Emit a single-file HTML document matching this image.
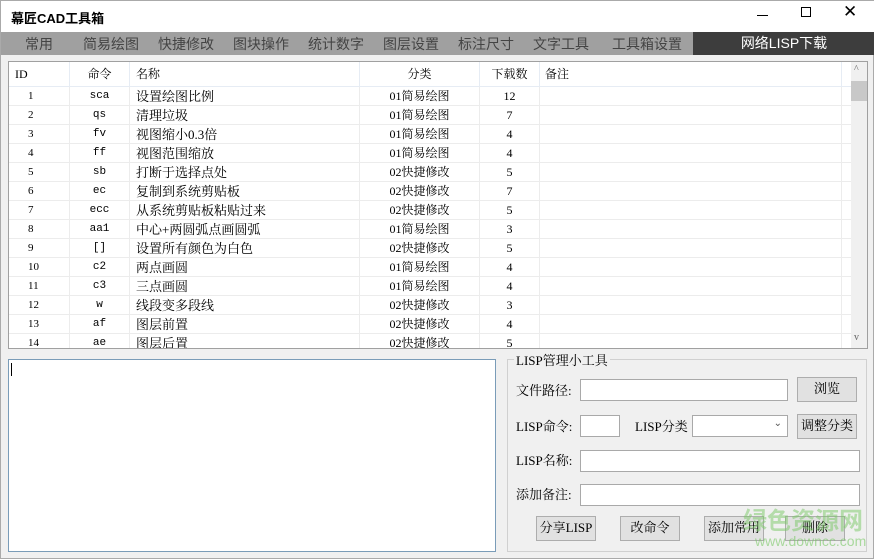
<!DOCTYPE html>
<html><head><meta charset="utf-8"><style>
*{margin:0;padding:0;box-sizing:border-box}
html{width:874px;height:559px;overflow:hidden;background:#f0f0f0}
body{width:874px;height:559px;background:#f0f0f0;font-family:"Liberation Serif","Noto Serif CJK SC","WenQuanYi Zen Hei",serif;font-size:12px;color:#000;position:relative;overflow:hidden;border:1px solid #aaa}
.abs{position:absolute}
#title{left:0;top:0;width:874px;height:31px;background:#fff}
#tabs{left:0;top:31px;width:874px;height:23px;background:#a0a0a0;font-family:"Liberation Sans","Noto Sans CJK SC",sans-serif;font-size:14px;color:#444}
#tabs span{position:absolute;top:2px}
#tbl{left:7px;top:60px;width:860px;height:288px;background:#fff;border:1px solid #a0a0a0;overflow:hidden}
.row{position:absolute;left:0;height:19px;width:842px;border-bottom:1px solid #ececec}
.c{position:absolute;top:0;height:19px;line-height:19px;border-right:1px solid #ececec;white-space:nowrap}
.hd .c{height:24px;line-height:24px;border-right:1px solid #e6ecf4}
.btn{position:absolute;background:#e1e1e1;border:1px solid #adadad;text-align:center;line-height:22px;font-size:13px}
.inp{position:absolute;background:#fff;border:1px solid #a9a9a9;height:22px}
.lab{position:absolute;font-size:13px;white-space:nowrap}
</style></head><body>
<div id="title" class="abs">
<div class="abs" style="left:10px;top:7px;font-family:'Liberation Sans','Noto Sans CJK SC',sans-serif;font-weight:bold;font-size:13px">幕匠CAD工具箱</div>
<div class="abs" style="left:756px;top:14px;width:11px;height:1px;background:#000"></div>
<div class="abs" style="left:800px;top:6px;width:10px;height:10px;border:1px solid #000"></div>
<div class="abs" style="left:842px;top:1px;font-family:'Liberation Sans',sans-serif;font-size:17px">✕</div>
</div>
<div id="tabs" class="abs">
<span style="left:24px">常用</span><span style="left:82px">简易绘图</span><span style="left:157px">快捷修改</span><span style="left:232px">图块操作</span><span style="left:307px">统计数字</span><span style="left:382px">图层设置</span><span style="left:457px">标注尺寸</span><span style="left:532px">文字工具</span><span style="left:611px">工具箱设置</span>
<div class="abs" style="left:692px;top:0;width:182px;height:23px;background:#3d3d3d;color:#fff;text-align:center;line-height:22px">网络LISP下载</div>
</div>
<div id="tbl" class="abs">
<div class="row hd" style="top:0;height:25px;border-bottom:1px solid #e6ecf4">
<div class="c" style="left:0;width:61px;padding-left:6px">ID</div>
<div class="c" style="left:61px;width:60px;text-align:center">命令</div>
<div class="c" style="left:121px;width:230px;padding-left:6px">名称</div>
<div class="c" style="left:351px;width:120px;text-align:center">分类</div>
<div class="c" style="left:471px;width:60px;text-align:center">下载数</div>
<div class="c" style="left:531px;width:302px;padding-left:5px">备注</div>
</div>
<div id="rows"></div>
<div class="abs" style="left:842px;top:0;width:16px;height:286px;background:#f0f0f0">
<div class="abs" style="left:3px;top:2px;font-size:10px;color:#666">^</div>
<div class="abs" style="left:0;top:19px;width:16px;height:20px;background:#c8c8c8"></div>
<div class="abs" style="left:3px;top:270px;font-size:10px;color:#666">v</div>
</div>
</div>
<div class="abs" style="left:7px;top:358px;width:488px;height:193px;background:#fff;border:1px solid #7a9cb8">
<div class="abs" style="left:2px;top:3px;width:1px;height:13px;background:#000"></div></div>
<div class="abs" style="left:506px;top:358px;width:360px;height:193px;border:1px solid #d0d0d0"></div>
<div class="lab" style="left:513px;top:349px;background:#f0f0f0;padding:0 2px">LISP管理小工具</div>
<div class="lab" style="left:515px;top:379px">文件路径:</div>
<div class="inp" style="left:579px;top:378px;width:208px"></div>
<div class="btn" style="left:796px;top:376px;width:60px;height:25px">浏览</div>
<div class="lab" style="left:515px;top:415px">LISP命令:</div>
<div class="inp" style="left:579px;top:414px;width:40px"></div>
<div class="lab" style="left:634px;top:415px">LISP分类</div>
<div class="inp" style="left:691px;top:414px;width:96px"><span style="position:absolute;right:5px;top:2px;font-size:10px;color:#555">⌄</span></div>
<div class="btn" style="left:796px;top:413px;width:60px;height:25px">调整分类</div>
<div class="lab" style="left:515px;top:449px">LISP名称:</div>
<div class="inp" style="left:579px;top:449px;width:280px"></div>
<div class="lab" style="left:515px;top:483px">添加备注:</div>
<div class="inp" style="left:579px;top:483px;width:280px"></div>
<div class="btn" style="left:535px;top:515px;width:60px;height:25px">分享LISP</div>
<div class="btn" style="left:619px;top:515px;width:60px;height:25px">改命令</div>
<div class="btn" style="left:703px;top:515px;width:60px;height:25px">添加常用</div>
<div class="btn" style="left:784px;top:515px;width:60px;height:25px">删除</div>
<div class="abs" style="left:742px;top:503px;font-family:'Noto Sans CJK SC',sans-serif;font-size:24px;line-height:30px;font-weight:bold;color:rgba(120,200,100,.5);white-space:nowrap">绿色资源网</div>
<div class="abs" style="left:754px;top:532px;font-family:'Liberation Sans',sans-serif;font-size:14px;color:rgba(120,200,100,.6);white-space:nowrap">www.downcc.com</div>
<script>
var d=[[1,'sca','设置绘图比例','01简易绘图',12],[2,'qs','清理垃圾','01简易绘图',7],[3,'fv','视图缩小0.3倍','01简易绘图',4],[4,'ff','视图范围缩放','01简易绘图',4],[5,'sb','打断于选择点处','02快捷修改',5],[6,'ec','复制到系统剪贴板','02快捷修改',7],[7,'ecc','从系统剪贴板粘贴过来','02快捷修改',5],[8,'aa1','中心+两圆弧点画圆弧','01简易绘图',3],[9,'[]','设置所有颜色为白色','02快捷修改',5],[10,'c2','两点画圆','01简易绘图',4],[11,'c3','三点画圆','01简易绘图',4],[12,'w','线段变多段线','02快捷修改',3],[13,'af','图层前置','02快捷修改',4],[14,'ae','图层后置','02快捷修改',5]];
var h='';d.forEach(function(r,i){var t=25+i*19;h+='<div class="row" style="top:'+t+'px"><div class="c" style="left:0;width:61px;padding-left:19px;font-size:11px">'+r[0]+'</div><div class="c" style="left:61px;width:60px;text-align:center;font-family:Liberation Mono,monospace;font-size:11px">'+r[1]+'</div><div class="c" style="left:121px;width:230px;padding-left:6px;font-size:13px">'+r[2]+'</div><div class="c" style="left:351px;width:120px;text-align:center">'+r[3]+'</div><div class="c" style="left:471px;width:60px;text-align:center">'+r[4]+'</div><div class="c" style="left:531px;width:302px"></div></div>';});
document.getElementById('rows').innerHTML=h;
</script>
</body></html>
